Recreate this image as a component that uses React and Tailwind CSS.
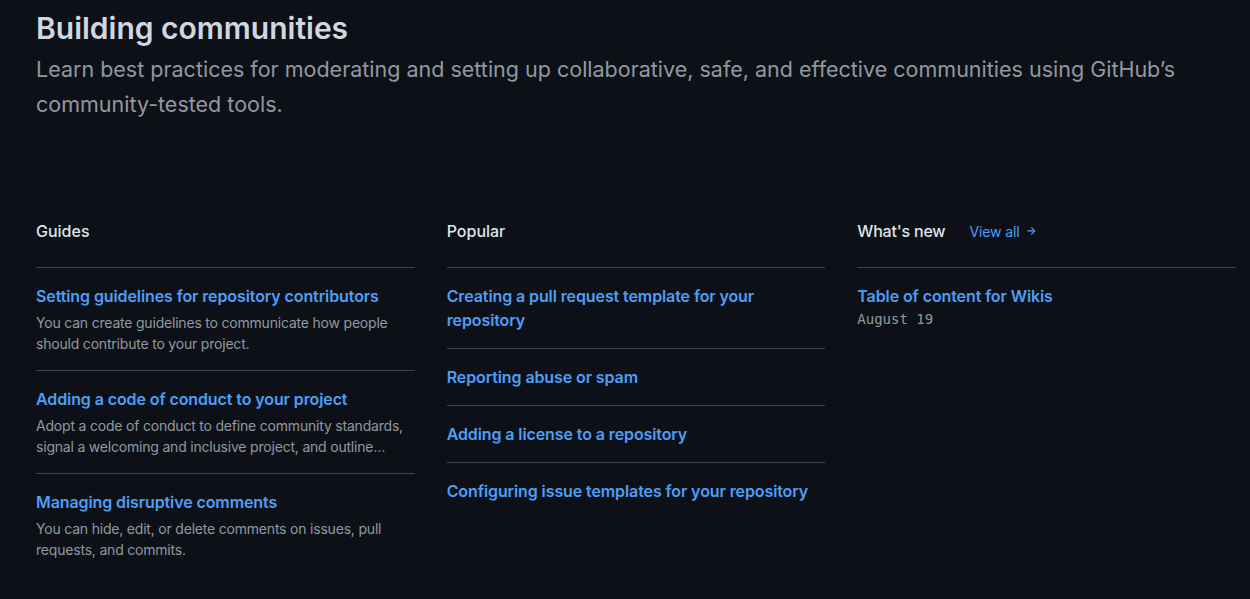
export default function App() {
  const guides = [
    {
      t: "Setting guidelines for repository contributors",
      d: "You can create guidelines to communicate how people should contribute to your project.",
    },
    {
      t: "Adding a code of conduct to your project",
      d: "Adopt a code of conduct to define community standards, signal a welcoming and inclusive project, and outline…",
    },
    {
      t: "Managing disruptive comments",
      d: "You can hide, edit, or delete comments on issues, pull requests, and commits.",
    },
  ];
  const popular = [
    "Creating a pull request template for your repository",
    "Reporting abuse or spam",
    "Adding a license to a repository",
    "Configuring issue templates for your repository",
  ];
  return (
    <div
      className="min-h-[599px] bg-[#0d1117] px-[36px] pt-[8px]"
      style={{ fontFamily: "Inter, 'Noto Sans', sans-serif" }}
    >
      <div className="w-[1200px]">
        <h1 className="text-[30px] leading-[40px] font-semibold text-[#d1d7e0] mb-[4px]">
          Building communities
        </h1>
        <p className="text-[21.5px] leading-[35px] text-[#9198a1]">
          Learn best practices for moderating and setting up collaborative, safe, and effective communities using GitHub’s community-tested tools.
        </p>
        <div className="grid grid-cols-3 gap-8 mt-[97px]">
          <div>
            <h2 className="text-[16px] leading-[24px] font-medium text-[#dfe5ec] mb-[24px]">Guides</h2>
            <ul>
              {guides.map((g) => (
                <li key={g.t} className="border-t border-[#3d444d] pt-[16px] pb-[16px]">
                  <a className="block text-[16px] leading-[24px] font-semibold text-[#4c9ff6] tracking-[-0.1px]">{g.t}</a>
                  <p className="mt-[4px] text-[14px] leading-[21px] text-[#9198a1] tracking-[-0.2px]">{g.d}</p>
                </li>
              ))}
            </ul>
          </div>
          <div>
            <h2 className="text-[16px] leading-[24px] font-medium text-[#dfe5ec] mb-[24px]">Popular</h2>
            <ul>
              {popular.map((p) => (
                <li key={p} className="border-t border-[#3d444d] pt-[16px] pb-[16px]">
                  <a className="block text-[16px] leading-[24px] font-semibold text-[#4c9ff6] tracking-[-0.1px]">{p}</a>
                </li>
              ))}
            </ul>
          </div>
          <div>
            <div className="flex items-center mb-[24px] h-[24px]">
              <h2 className="text-[16px] leading-[24px] font-medium text-[#dfe5ec] tracking-[-0.2px]">What's new</h2>
              <a className="ml-[24px] flex items-center text-[14px] leading-[21px] text-[#4c9ff6] tracking-[-0.1px]">
                View all
                <svg width="12" height="12" viewBox="0 0 16 16" className="ml-[5px]" fill="currentColor">
                  <path d="M8.22 2.97a.75.75 0 0 1 1.06 0l4.25 4.25a.75.75 0 0 1 0 1.06l-4.25 4.25a.75.75 0 0 1-1.042-.018.75.75 0 0 1-.018-1.042l2.97-2.97H3.75a.75.75 0 0 1 0-1.5h7.44L8.22 4.03a.75.75 0 0 1 0-1.06Z" />
                </svg>
              </a>
            </div>
            <ul>
              <li className="border-t border-[#3d444d] pt-[16px] pb-[16px]">
                <a className="block text-[16px] leading-[24px] font-semibold text-[#4c9ff6] tracking-[-0.1px]">Table of content for Wikis</a>
                <div
                  className="text-[14px] leading-[21px] text-[#9198a1] mt-[1px]"
                  style={{ fontFamily: "'DejaVu Sans Mono', 'Liberation Mono', monospace" }}
                >
                  August 19
                </div>
              </li>
            </ul>
          </div>
        </div>
      </div>
    </div>
  );
}
